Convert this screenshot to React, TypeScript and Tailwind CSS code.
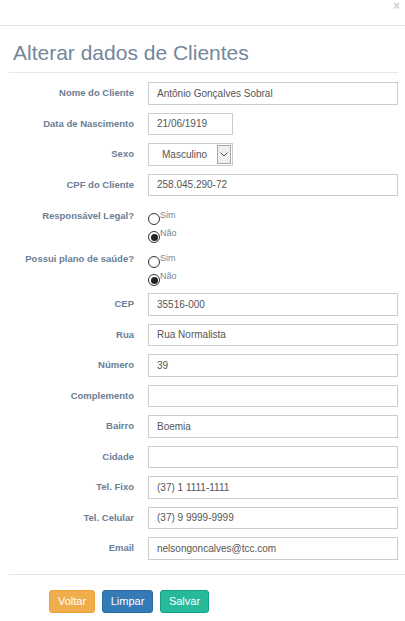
import type { ReactNode } from 'react'

const font = { fontFamily: '"Liberation Sans", Arial, sans-serif' }

function Row({ label, children }: { label: string; children: ReactNode }) {
  return (
    <div className="flex h-[22.5px] items-center">
      <label className="w-[134px] shrink-0 text-right text-[9.5px] font-bold text-[#6a7d96]">{label}</label>
      <div className="ml-[14px] flex h-full flex-1">{children}</div>
    </div>
  )
}

function Field({ value = '', narrow = false }: { value?: string; narrow?: boolean }) {
  return (
    <div
      className={`flex h-full items-center border border-[#cccccc] bg-white pl-[8px] text-[10px] text-[#555555] ${narrow ? 'w-[85px]' : 'w-[250px]'}`}
    >
      {value}
    </div>
  )
}

function Radio({ label, checked = false }: { label: string; checked?: boolean }) {
  return (
    <div className="flex h-[18px] items-center">
      <span className="flex h-[12px] w-[12px] items-center justify-center rounded-full border border-[#333333] bg-white">
        {checked && <span className="h-[7px] w-[7px] rounded-full bg-[#222222]" />}
      </span>
      <span className="-mt-[6px] text-[9px] text-[#73879c]">{label}</span>
    </div>
  )
}

function RadioRow({ label, top }: { label: string; top: string }) {
  return (
    <div className={`flex items-start ${top}`}>
      <label className="mt-[-1px] w-[134px] shrink-0 text-right text-[9.5px] font-bold text-[#6a7d96]">{label}</label>
      <div className="ml-[14px] flex flex-col">
        <Radio label="Sim" />
        <Radio label="Não" checked />
      </div>
    </div>
  )
}

export default function App() {
  return (
    <div className="relative h-[621px] w-[405px] overflow-hidden bg-white" style={font}>
      <div className="relative h-[26px] border-b border-[#e5e5e5]">
        <span className="absolute right-[5px] top-[-3px] text-[12px] font-bold text-[#cfcfcf]">×</span>
      </div>

      <h2 className="ml-[13px] mt-[12px] text-[21px] leading-[30px] text-[#73879c]">Alterar dados de Clientes</h2>
      <div className="ml-[9px] mr-[7px] mt-[4px] h-[1px] bg-[#e6e9ed]" />

      <div className="mt-[9px] flex flex-col">
        <div className="flex flex-col gap-[8px]">
          <Row label="Nome do Cliente">
            <Field value="Antônio Gonçalves Sobral" />
          </Row>
          <Row label="Data de Nascimento">
            <Field value="21/06/1919" narrow />
          </Row>
          <Row label="Sexo">
            <div className="flex h-full w-[85px] items-center border border-[#cccccc] bg-white">
              <span className="flex-1 pl-[13px] text-[10px] text-[#555555]">Masculino</span>
              <span className="mr-[1px] flex h-[19px] w-[14px] items-center justify-center border border-[#a9a9a9] bg-[#eeeeee]">
                <svg width="8" height="5" viewBox="0 0 8 5" fill="none">
                  <path d="M0.5 0.5L4 4L7.5 0.5" stroke="#555" strokeWidth="1" />
                </svg>
              </span>
            </div>
          </Row>
          <Row label="CPF do Cliente">
            <Field value="258.045.290-72" />
          </Row>
        </div>

        <RadioRow label="Responsável Legal?" top="mt-[14px]" />
        <RadioRow label="Possui plano de saúde?" top="mt-[7px]" />

        <div className="mt-[4px] flex flex-col gap-[8px]">
          <Row label="CEP">
            <Field value="35516-000" />
          </Row>
          <Row label="Rua">
            <Field value="Rua Normalista" />
          </Row>
          <Row label="Número">
            <Field value="39" />
          </Row>
          <Row label="Complemento">
            <Field />
          </Row>
          <Row label="Bairro">
            <Field value="Boemia" />
          </Row>
          <Row label="Cidade">
            <Field />
          </Row>
          <Row label="Tel. Fixo">
            <Field value="(37) 1 1111-1111" />
          </Row>
          <Row label="Tel. Celular">
            <Field value="(37) 9 9999-9999" />
          </Row>
          <Row label="Email">
            <Field value="nelsongoncalves@tcc.com" />
          </Row>
        </div>
      </div>

      <div className="ml-[9px] mt-[14px] h-[1px] bg-[#e5e5e5]" />

      <div className="ml-[49px] mt-[15px] flex gap-[7px]">
        <button type="button" className="h-[23px] w-[46px] rounded-[3px] border border-[#eea236] bg-[#f0ad4e] text-[11px] text-white">
          Voltar
        </button>
        <button type="button" className="h-[23px] w-[51px] rounded-[3px] border border-[#2e6da4] bg-[#337ab7] text-[11px] text-white">
          Limpar
        </button>
        <button type="button" className="h-[23px] w-[49px] rounded-[3px] border border-[#169f85] bg-[#26b99a] text-[11px] text-white">
          Salvar
        </button>
      </div>
    </div>
  )
}
